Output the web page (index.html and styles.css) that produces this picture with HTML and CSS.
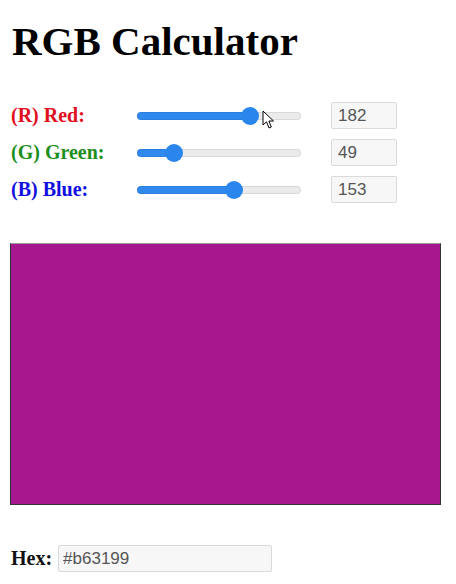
FILE: index.html
```html
<!DOCTYPE html>
<html lang="en">
<head>
<meta charset="utf-8">
<title>RGB Calculator</title>
<link rel="stylesheet" href="styles.css">
</head>
<body>
  <h1 class="title">RGB Calculator</h1>
  <div class="controls">
    <div class="row">
      <label class="label red" for="r">(R) Red:</label>
      <input class="slider" id="r" type="range" min="0" max="255" value="182" style="--fill: 68.9%">
      <input class="num" type="text" value="182">
    </div>
    <div class="row">
      <label class="label green" for="g">(G) Green:</label>
      <input class="slider" id="g" type="range" min="0" max="255" value="49" style="--fill: 22.6%">
      <input class="num" type="text" value="49">
    </div>
    <div class="row">
      <label class="label blue" for="b">(B) Blue:</label>
      <input class="slider" id="b" type="range" min="0" max="255" value="153" style="--fill: 58.9%">
      <input class="num" type="text" value="153">
    </div>
    <svg class="cursor" width="13" height="20" viewBox="0 0 13 20">
      <path d="M1 1 L1 15 L4.5 11.8 L7 18 L9.3 17 L6.9 11 L11.5 11 Z" fill="#fff" stroke="#000" stroke-width="1" stroke-linejoin="round"/>
    </svg>
  </div>
  <div class="swatch"></div>
  <div class="hex-row">
    <span class="hex-label">Hex:</span>
    <input class="hex" type="text" value="#b63199">
  </div>
</body>
</html>
```
FILE: styles.css
```css
html, body {
  margin: 0;
  padding: 0;
  background: #fff;
}
body {
  padding: 0 10px;
  font-family: "Liberation Serif", "Times New Roman", serif;
}
.title {
  margin: 18px 0 0 2px;
  font-size: 41px;
  line-height: 46px;
  font-weight: bold;
  color: #000;
}
.controls {
  position: relative;
  margin-top: 33px;
}
.row {
  display: flex;
  align-items: center;
  height: 37px;
}
.label {
  box-sizing: border-box;
  width: 127px;
  padding-left: 1px;
  font-size: 20px;
  font-weight: bold;
}
.red { color: #e0101f; }
.green { color: #1e8f1e; }
.blue { color: #1010e0; }
.slider {
  -webkit-appearance: none;
  appearance: none;
  width: 164px;
  height: 18px;
  margin: 0 30px 0 0;
  padding: 0;
  background: transparent;
}
.slider::-webkit-slider-runnable-track {
  height: 8px;
  border-radius: 4px;
  background: linear-gradient(to right, #3089ee 0, #3089ee var(--fill), #ebebeb var(--fill), #ebebeb 100%);
  box-shadow: inset 0 0 0 1px rgba(0,0,0,0.08);
}
.slider::-webkit-slider-thumb {
  -webkit-appearance: none;
  appearance: none;
  width: 18px;
  height: 18px;
  margin-top: -5px;
  border-radius: 50%;
  background: #2a85ec;
  border: none;
}
.num {
  box-sizing: border-box;
  width: 66px;
  height: 27px;
  margin: 0;
  padding: 0 6px;
  border: 1px solid #dadada;
  border-radius: 2px;
  background: #f7f7f7;
  font-family: "Liberation Sans", Arial, sans-serif;
  font-size: 17px;
  color: #555;
  outline: none;
}
.cursor {
  position: absolute;
  left: 252px;
  top: 13px;
}
.swatch {
  box-sizing: border-box;
  width: 431px;
  height: 262px;
  margin-top: 35px;
  border: 1px solid #333;
  border-top-color: #9a9a9a;
  background: #a7188f;
}
.hex-row {
  display: flex;
  align-items: center;
  gap: 6px;
  margin-top: 40px;
  height: 27px;
}
.hex-label {
  font-size: 20px;
  font-weight: bold;
  color: #111;
  margin-left: 1px;
}
.hex {
  box-sizing: border-box;
  width: 214px;
  height: 27px;
  margin: 0;
  padding: 0 4px;
  border: 1px solid #dadada;
  border-radius: 2px;
  background: #f7f7f7;
  font-family: "Liberation Sans", Arial, sans-serif;
  font-size: 17px;
  color: #555;
  outline: none;
}
```
